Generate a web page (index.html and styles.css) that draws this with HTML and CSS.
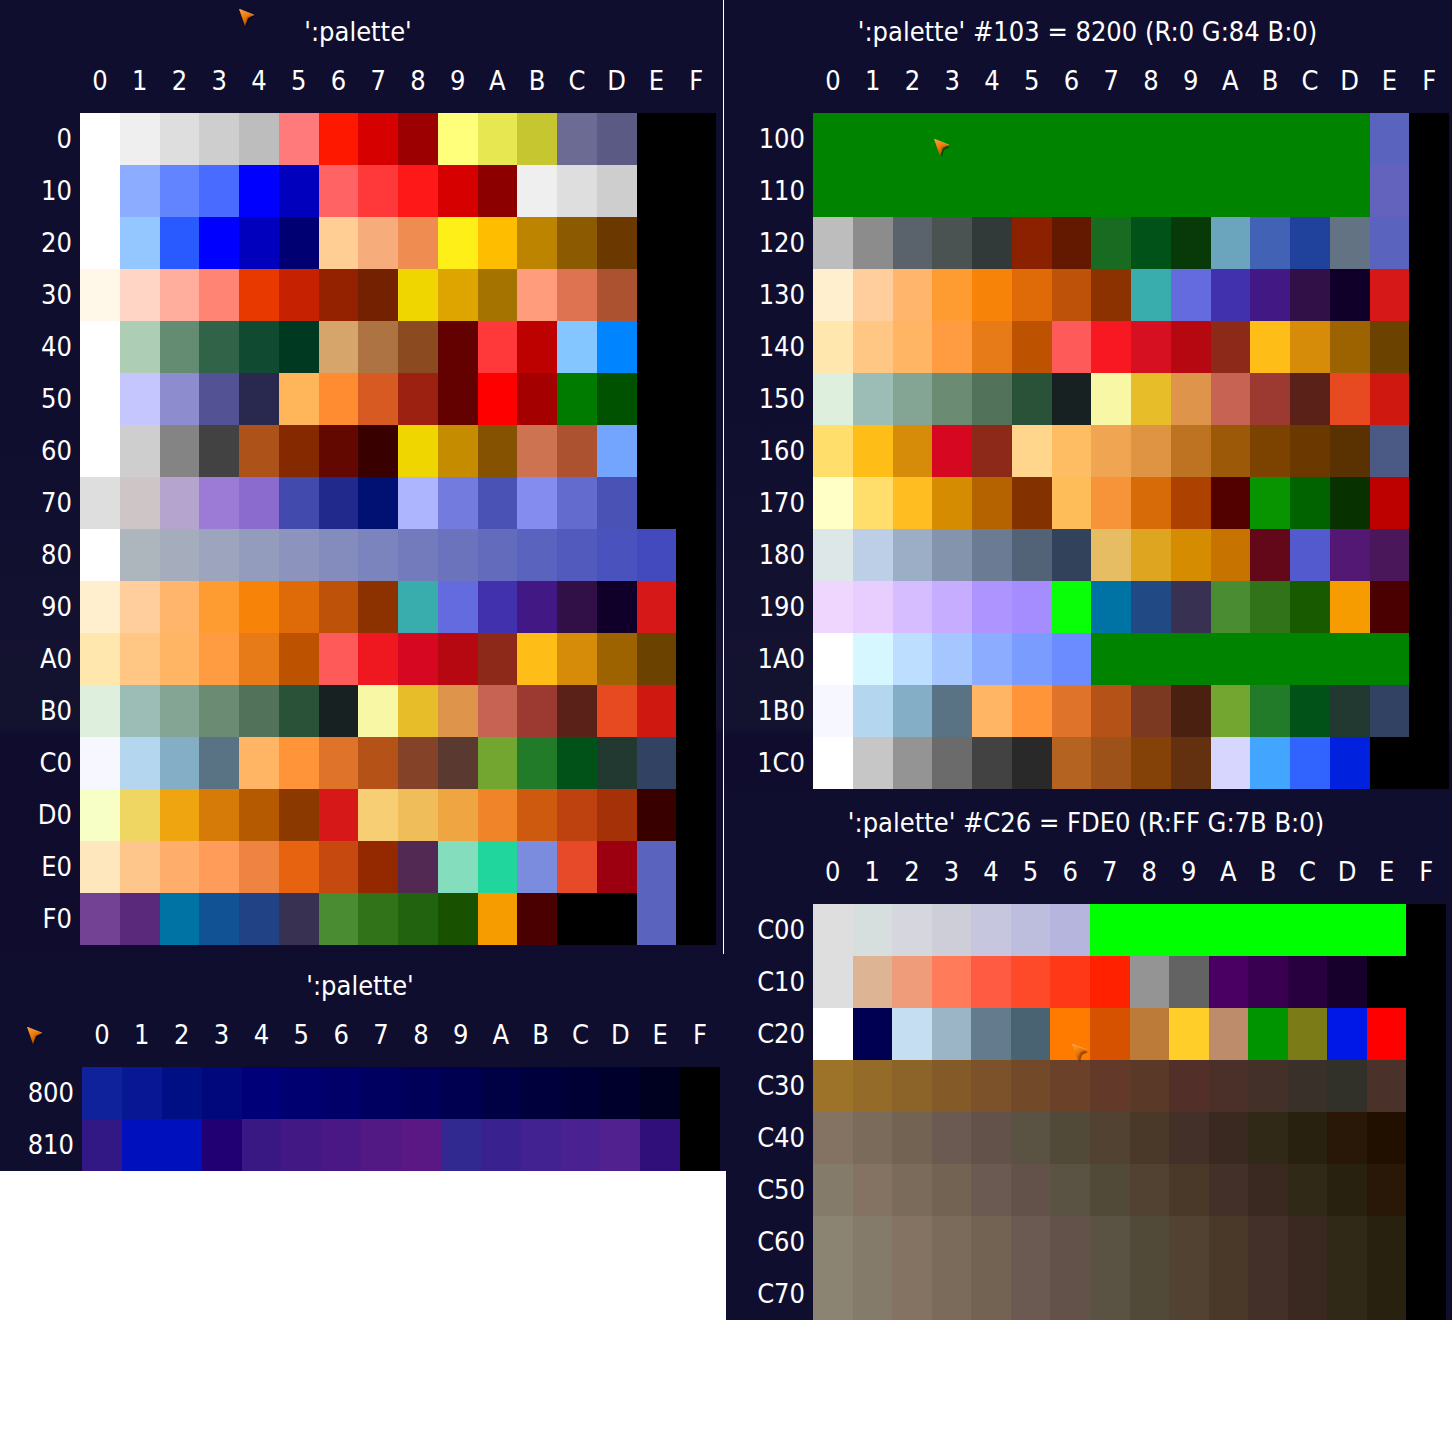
FILE: index.html
```html
<!DOCTYPE html>
<html lang="en">
<head>
<meta charset="utf-8">
<meta name="viewport" content="width=device-width, initial-scale=1">
<title>:palette</title>
<link rel="stylesheet" href="styles.css">
</head>
<body>
<svg width="0" height="0" class="defs" aria-hidden="true">
  <defs>
    <linearGradient id="flame" x1="0" y1="0" x2="0.6" y2="1">
      <stop offset="0" stop-color="#ffa040"/>
      <stop offset="0.5" stop-color="#f07c08"/>
      <stop offset="1" stop-color="#a84400"/>
    </linearGradient>
    <symbol id="pointer" viewBox="0 0 18 19">
      <path d="M1 2L16 8L10 11L8 18Z" fill="#000" opacity="0.4"/>
      <path d="M0 0L15 6L9 9L6 17Z" fill="url(#flame)"/>
      <path d="M15 6L9 9L6 17L8 8Z" fill="#8a3c00" opacity="0.4"/>
      <path d="M0 0L15 6" stroke="#ffb868" stroke-width="1" opacity="0.6"/>
    </symbol>
  </defs>
</svg>
<main class="sheet">
  <div class="column">
    <section class="panel panel-low">
      <table class="palette" data-set="low"><caption>':palette'</caption></table>
      <svg class="pointer"><use href="#pointer"/></svg>
    </section>
    <section class="panel panel-800">
      <table class="palette" data-set="p800"><caption>':palette'</caption></table>
      <svg class="pointer"><use href="#pointer"/></svg>
    </section>
  </div>
  <div class="column">
    <section class="panel panel-100">
      <table class="palette" data-set="p100"><caption>':palette' #103 = 8200 (R:0 G:84 B:0)</caption></table>
      <svg class="pointer"><use href="#pointer"/></svg>
    </section>
    <section class="panel panel-c00">
      <table class="palette" data-set="pc00"><caption>':palette' #C26 = FDE0 (R:FF G:7B B:0)</caption></table>
      <svg class="pointer"><use href="#pointer"/></svg>
    </section>
  </div>
</main>
<script src="palette.js"></script>
</body>
</html>
```

FILE: styles.css
```css
* {
  box-sizing: border-box;
}

body {
  margin: 0;
  background: #fff;
  color: #fff;
  font-family: "DejaVu Sans Condensed", "Noto Sans", sans-serif;
  font-size: 27px;
  line-height: 32px;
}

.defs {
  display: block;
}

.sheet {
  display: grid;
  grid-template-columns: 1fr 1fr;
  align-items: start;
}

.panel {
  position: relative;
  background: #100e2f;
}

.panel-low {
  --label: 80px;
  margin-right: 2px;
  padding: 0 7px 9px 0;
  border-right: 1px solid #fff;
  background: linear-gradient(#100e2f 45%, #14132f 76%, #0f0c2d 77%);
}

.column:first-child {
  background: linear-gradient(#120f35, #120f35) top / 100% 954px no-repeat;
}

.panel-800 {
  --label: 82px;
  padding-right: 6px;
}

.panel-100 {
  --label: 87px;
  padding: 0 3px 2px 0;
  background: linear-gradient(#100e2f 50%, #14132f 92%, #0f0c2d 93%);
}

.panel-c00 {
  --label: 87px;
  padding-right: 6px;
}

.palette {
  width: 100%;
  table-layout: fixed;
  border-collapse: collapse;
}

.palette caption {
  padding: 16px 0;
}

.palette th {
  padding: 0;
  font-weight: 400;
}

.palette thead th {
  height: 49px;
  padding-bottom: 15px;
}

.palette .corner {
  width: var(--label);
}

.palette tbody th {
  height: 52px;
  padding-right: 8px;
  text-align: right;
}

.palette td {
  padding: 0;
}

.pointer {
  position: absolute;
  width: 18px;
  height: 19px;
}

.panel-low .pointer {
  left: 239px;
  top: 9px;
}

.panel-800 .pointer {
  left: 27px;
  top: 73px;
}

.panel-100 .pointer {
  left: 208px;
  top: 139px;
}

.panel-c00 .pointer {
  left: 346px;
  top: 253px;
}
```

FILE: palette.js
```js
// Each row: label, then up to sixteen colours. "hex*n" repeats a colour n times.
const sets = {
  low: [
    ["0", "ffffff efefef dedede cecece bdbdbd ff7b7b ff1800 d60000 9c0000 ffff7b e7e752 c6c631 6b6b94 5a5a84 000000*2"],
    ["10", "ffffff 8cadff 6384ff 4a6bff 0000ff 0000bd ff6363 ff3939 ff1818 d60000 8c0000 efefef dedede cecece 000000*2"],
    ["20", "ffffff 94c6ff 295aff 0000ff 0000bd 000073 ffce94 f7ad7b ef8c52 ffef18 ffbd00 bd8400 8c5a00 6b3900 000000*2"],
    ["30", "fff7e7 ffd6c6 ffad9c ff8473 e73900 c62100 942100 732100 efd600 dea500 a57300 ff9c7b de7352 ad5231 000000*2"],
    ["40", "ffffff adceb5 638c73 316348 104a31 003921 d6a56b ad7342 8c4a21 630000 ff3939 bd0000 84c6ff 0084ff 000000*2"],
    ["50", "ffffff c6c6ff 8c8cce 525294 29294f ffb55a ff8c31 d65a21 9c2110 630000 ff0000 a50000 007b00 005200 000000*2"],
    ["60", "ffffff cecece 848484 424242 ad5218 842900 630800 390000 efd600 c68c00 845200 ce7352 ad5231 73a5ff 000000*2"],
    ["70", "dedede cec6c6 b5a5ce 9c7bd6 8c6bce 424aad 21298c 001073 adb5ff 737bde 4a52b5 848cef 636bce 4a52b5 000000*2"],
    ["80", "ffffff adb5bd a5adbd 9ca5bd 949cbd 8c94bd 848cbd 7b84bd 737bbd 6b73bd 636bbd 5a63bd 525abd 4a52bd 424abd 000000"],
    ["90", "ffefce ffce9c ffb56b ff9c31 f78408 de6b08 bd5208 8c3100 39adad 636bde 4231ad 421884 311048 100029 d61818 000000"],
    ["A0", "ffe7ad ffc684 ffb563 ff9c42 e77b18 bd5200 ff5a5a ef1821 d60821 b50810 8c2918 ffbd18 d68c08 9c6300 6b4200 000000"],
    ["B0", "deefde 9cbdb5 84a594 6b8c73 52735a 295239 182121 f7f7a5 e7bd29 de944a c66352 9c3931 5a2118 e74a21 ce1810 000000"],
    ["C0", "f7f7ff b5d6ef 84adc6 5a7384 ffb563 ff9439 de7329 b55218 844229 5a3931 73a531 217b29 005218 213931 314263 000000"],
    ["D0", "f7ffc6 efd663 efa510 d67b08 b55a00 8c3900 d61818 f7ce73 efbd5a efa542 ef8429 ce5a10 bd4210 a53108 390000 000000"],
    ["E0", "ffe7bd ffc68c ffad6b ff9c5a ef8442 e76310 c64a10 942900 522952 84debd 21d69c 7b8cde e74a29 9c0010 5a63bd 000000"],
    ["F0", "734294 5a297b 0073a5 105294 214284 393152 4a8c31 317318 21630f 185200 f79c00 4a0000 000000*2 5a63bd 000000"]
  ],
  p800: [
    ["800", "10219c 081894 001084 00087b 000078 000070 000068 000060 000058 000050 000045 00003c 000034 00002c 000021 000000"],
    ["810", "311884 0010bd*2 210073 391884 421884 4a1884 521884 5a1884 312990 392190 422190 4a2190 522190 310f7b 000000"]
  ],
  p100: [
    ["100", "008400*14 5a63bd 000000"],
    ["110", "008400*14 6363bd 000000"],
    ["120", "bdbdbd 8c8c8c 5a636b 4a5252 313939 8c2100 631800 186b21 005218 083908 6ba5bd 4263b5 21429c 637384 5a63bd 000000"],
    ["130", "ffefce ffce9c ffb56b ff9c31 f78408 de6b08 bd5208 8c3100 39adad 636bde 4231ad 421884 311048 100029 d61818 000000"],
    ["140", "ffe7ad ffc684 ffb563 ff9c42 e77b18 bd5200 ff5a5a f71821 d61021 b50810 8c2918 ffbd18 d68c08 9c6300 6b4200 000000"],
    ["150", "deefde 9cbdb5 84a594 6b8c73 52735a 295239 182121 f7f7a5 e7bd29 de944a c66352 9c3931 5a2118 e74a21 ce1810 000000"],
    ["160", "ffde6b ffbd18 d68c08 d60821 8c2918 ffd68c ffbd63 efa552 de9442 bd7321 9c5a08 7b4200 6b3900 5a3100 4a5a84 000000"],
    ["170", "ffffc6 ffde6b ffbd21 d68c00 b56300 843100 ffbd5a f79439 d66b08 ad4200 520000 089400 006300 083100 bd0000 000000"],
    ["180", "dee7e7 bdcee7 9cadc6 8494ad 6b7b94 526378 31425a e7bd63 dea521 d68c00 c67300 630818 525ace 521873 4a185a 000000"],
    ["190", "efd6ff e7ceff d6bdff c6adff ad94ff a58cff 08ff08 0073a5 214a84 393152 4a8c31 317318 185a00 f79c00 4a0000 000000"],
    ["1A0", "ffffff d6f7ff bddeff a5c6ff 8cadff 7b9cff 6b8cff 008400*8 000000"],
    ["1B0", "f7f7ff b5d6ef 84adc6 5a7384 ffb563 ff9439 de7329 b55218 7b3921 4a2110 73a531 217b29 005218 213931 314263 000000"],
    ["1C0", "ffffff c6c6c6 949494 6b6b6b 424242 292929 b56321 9c5218 844208 633110 d6d6ff 42a5ff 3163ff 0021de 000000*2"]
  ],
  pc00: [
    ["C00", "dedede d6dede d6d6de ceced9 c6c6de bdbdde b5b5de 00ff00*8 000000"],
    ["C10", "dedede deb594 ef9c7b ff7b5a ff5a42 ff4a29 ff3918 ff2100 949494 636363 4a0063 390052 29003f 18002c 000000*2"],
    ["C20", "ffffff 000052 c6def2 9cb5c6 637b8c 4a6373 ff7b00 d65200 bd7b39 ffce29 bd8c6b 009400 7b7b18 0018e7 ff0000 000000"],
    ["C30", "9c7329 946b29 8c6329 845a29 7b5229 734a29 6b4229 633929 5a3929 523029 4a3029 423029 393029 313129 4a3129 000000"],
    ["C40", "847363 7b6b5a 736352 6b5a52 63524a 5a5242 524a39 524231 4a3929 423029 392921 312918 292110 291808 211000 000000"],
    ["C50", "847b6b 847363 7b6b5a 736352 6b5a52 63524a 5a5242 524a39 524231 4a3929 423029 392921 312918 292110 291808 000000"],
    ["C60", "8c8473 847b6b 847363 7b6b5a 736352 6b5a52 63524a 5a5242 524a39 524231 4a3929 423029 392921 312918 292110 000000"],
    ["C70", "8c8473 847b6b 847363 7b6b5a 736352 6b5a52 63524a 5a5242 524a39 524231 4a3929 423029 392921 312918 292110 000000"]
  ]
};

function heading(text, scope) {
  const th = document.createElement("th");
  th.scope = scope;
  th.textContent = text;
  return th;
}

for (const table of document.querySelectorAll(".palette")) {
  const top = table.createTHead().insertRow();
  top.insertCell().className = "corner";
  for (const digit of "0123456789ABCDEF") top.append(heading(digit, "col"));

  const body = table.createTBody();
  for (const [label, colours] of sets[table.dataset.set]) {
    const row = body.insertRow();
    row.append(heading(label, "row"));
    for (const run of colours.split(" ")) {
      const [hex, count = 1] = run.split("*");
      for (let i = 0; i < count; i++) row.insertCell().style.backgroundColor = "#" + hex;
    }
  }
}
```
